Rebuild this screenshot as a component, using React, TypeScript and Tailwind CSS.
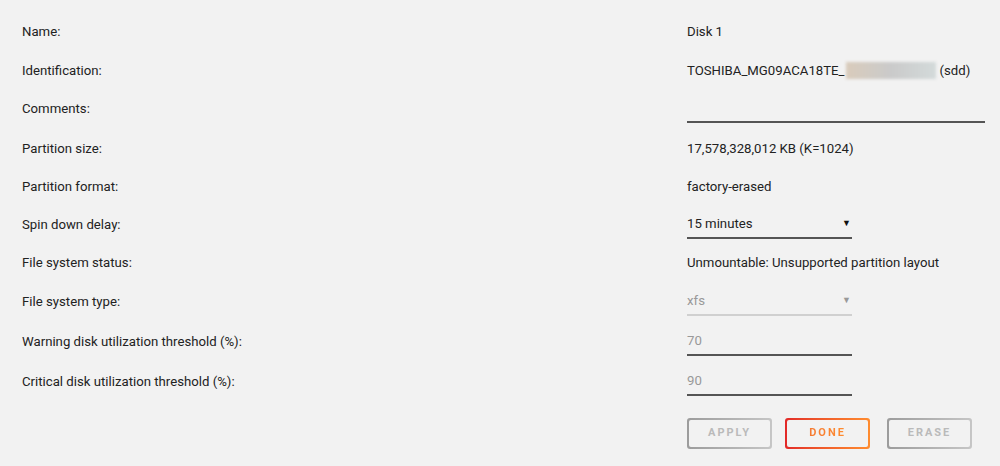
import React from "react";

function Underlined({
  children,
  width,
  line,
  arrow,
  textColor,
}: {
  children?: React.ReactNode;
  width: string;
  line: string;
  arrow?: string;
  textColor: string;
}) {
  return (
    <div className={`flex h-[28px] items-center justify-between border-b-2 ${line} ${width} ${textColor}`}>
      <span>{children}</span>
      {arrow ? <span className={`mr-[1px] text-[9px] ${arrow}`}>▼</span> : null}
    </div>
  );
}

function GradButton({ label, from, to, text }: { label: string; from: string; to: string; text: string }) {
  return (
    <div className={`h-[31px] w-[85px] rounded-[3px] bg-linear-to-r p-[2px] ${from} ${to}`}>
      <div className="flex h-full w-full items-center justify-center rounded-[2px] bg-[#f2f2f2]">
        <span className={`text-[11px] font-bold tracking-[2px] ${text}`}>{label}</span>
      </div>
    </div>
  );
}

export default function App() {
  const data: { label: string; h: string; value: React.ReactNode }[] = [
    { label: "Name:", h: "h-[39px]", value: <span>Disk 1</span> },
    {
      label: "Identification:",
      h: "h-[39px]",
      value: (
        <span className="flex items-center">
          <span>TOSHIBA_MG09ACA18TE_</span>
          <span className="ml-[1px] inline-block h-[17px] w-[90px] bg-linear-to-r from-[#d9cbbb] via-[#cacaca] to-[#d3dada] blur-[1.5px]" />
          <span className="ml-[4px]">(sdd)</span>
        </span>
      ),
    },
    {
      label: "Comments:",
      h: "h-[38px]",
      value: <Underlined width="w-[298px]" line="border-[#555]" textColor="text-[#222]" />,
    },
    { label: "Partition size:", h: "h-[41px]", value: <span>17,578,328,012 KB (K=1024)</span> },
    { label: "Partition format:", h: "h-[36px]", value: <span>factory-erased</span> },
    {
      label: "Spin down delay:",
      h: "h-[39px]",
      value: (
        <Underlined width="w-[165px]" line="border-[#555]" arrow="text-[#111]" textColor="text-[#222]">
          15 minutes
        </Underlined>
      ),
    },
    { label: "File system status:", h: "h-[38px]", value: <span>Unmountable: Unsupported partition layout</span> },
    {
      label: "File system type:",
      h: "h-[40px]",
      value: (
        <Underlined width="w-[165px]" line="border-[#d0d0d0]" arrow="text-[#999]" textColor="text-[#999]">
          xfs
        </Underlined>
      ),
    },
    {
      label: "Warning disk utilization threshold (%):",
      h: "h-[40px]",
      value: (
        <Underlined width="w-[165px]" line="border-[#555]" textColor="text-[#999]">
          70
        </Underlined>
      ),
    },
    {
      label: "Critical disk utilization threshold (%):",
      h: "h-[39px]",
      value: (
        <Underlined width="w-[165px]" line="border-[#555]" textColor="text-[#999]">
          90
        </Underlined>
      ),
    },
  ];

  return (
    <div
      className="h-[466px] w-[1000px] overflow-hidden bg-[#f2f2f2] pt-[12px] text-[13.2px] text-[#222]"
      style={{ fontFamily: 'Roboto, "Noto Sans", sans-serif' }}
    >
      {data.map((r) => (
        <div key={r.label} className={`flex items-center ${r.h}`}>
          <div className="w-[687px] pl-[22px]">{r.label}</div>
          <div className="flex-1">{r.value}</div>
        </div>
      ))}
      <div className="mt-[17px] flex gap-[13px] pl-[687px]">
        <GradButton label="APPLY" from="from-[#9c9c9c]" to="to-[#c6c6c6]" text="text-[#bababa]" />
        <div className="h-[31px] w-[85px] rounded-[3px] bg-linear-to-r from-[#e22828] to-[#ff8c2f] p-[2px]">
          <div className="flex h-full w-full items-center justify-center rounded-[2px] bg-[#f2f2f2]">
            <span className="bg-linear-to-r from-[#f57a32] to-[#ff8c2f] bg-clip-text text-[11px] font-bold tracking-[2px] text-transparent">
              DONE
            </span>
          </div>
        </div>
        <div className="ml-[4px]">
          <GradButton label="ERASE" from="from-[#9c9c9c]" to="to-[#c6c6c6]" text="text-[#bababa]" />
        </div>
      </div>
    </div>
  );
}
